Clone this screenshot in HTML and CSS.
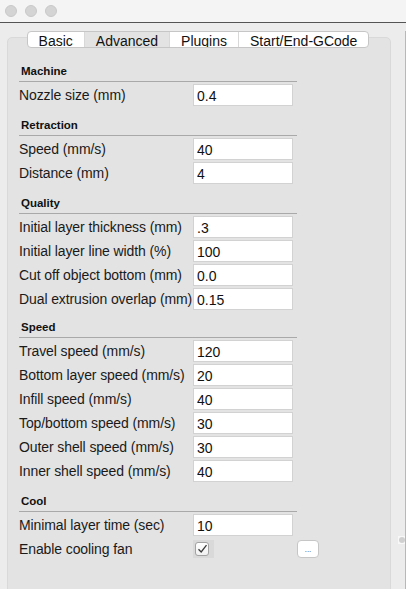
FILE: index.html
```html
<!DOCTYPE html>
<html>
<head>
<meta charset="utf-8">
<link rel="stylesheet" href="styles.css">
</head>
<body>
<div class="titlebar">
  <span class="light"></span><span class="light"></span><span class="light"></span>
</div>
<div class="content">
  <div class="main">
    <div class="tabs">
      <span class="tab">Basic</span>
      <span class="tab tab-selected">Advanced</span>
      <span class="tab">Plugins</span>
      <span class="tab">Start/End-GCode</span>
    </div>
    <div class="group">
      <div class="section">
        <div class="head">Machine</div>
        <div class="rows">
          <label class="label">Nozzle size (mm)</label><input class="field" value="0.4" readonly>
        </div>
      </div>
      <div class="section">
        <div class="head">Retraction</div>
        <div class="rows">
          <label class="label">Speed (mm/s)</label><input class="field" value="40" readonly>
          <label class="label">Distance (mm)</label><input class="field" value="4" readonly>
        </div>
      </div>
      <div class="section">
        <div class="head">Quality</div>
        <div class="rows">
          <label class="label">Initial layer thickness (mm)</label><input class="field" value=".3" readonly>
          <label class="label">Initial layer line width (%)</label><input class="field" value="100" readonly>
          <label class="label">Cut off object bottom (mm)</label><input class="field" value="0.0" readonly>
          <label class="label">Dual extrusion overlap (mm)</label><input class="field" value="0.15" readonly>
        </div>
      </div>
      <div class="section section-tight">
        <div class="head">Speed</div>
        <div class="rows">
          <label class="label">Travel speed (mm/s)</label><input class="field" value="120" readonly>
          <label class="label">Bottom layer speed (mm/s)</label><input class="field" value="20" readonly>
          <label class="label">Infill speed (mm/s)</label><input class="field" value="40" readonly>
          <label class="label">Top/bottom speed (mm/s)</label><input class="field" value="30" readonly>
          <label class="label">Outer shell speed (mm/s)</label><input class="field" value="30" readonly>
          <label class="label">Inner shell speed (mm/s)</label><input class="field" value="40" readonly>
        </div>
      </div>
      <div class="section">
        <div class="head">Cool</div>
        <div class="rows">
          <label class="label">Minimal layer time (sec)</label><input class="field" value="10" readonly>
          <label class="label">Enable cooling fan</label>
          <span class="check-cell">
            <span class="checkbox">
              <svg width="11" height="10" viewBox="0 0 11 10"><path d="M1.5 5.2 L4.2 8 L9.5 1.2" fill="none" stroke="#3a3a3a" stroke-width="1.3"/></svg>
            </span>
          </span>
          <span class="more-btn">...</span>
        </div>
      </div>
    </div>
  </div>
  <div class="strip">
    <span class="knob"></span>
  </div>
</div>
</body>
</html>
```
FILE: styles.css
```css
html, body {
  margin: 0;
  padding: 0;
  width: 406px;
  height: 589px;
  overflow: hidden;
  background: #ececec;
  font-family: "Liberation Sans", Arial, sans-serif;
  color: #1d1d1d;
}

.titlebar {
  height: 22px;
  background: #f4f4f4;
  border-bottom: 1px solid #545454;
  display: flex;
  align-items: center;
  gap: 8px;
  padding-left: 5px;
  box-sizing: content-box;
}

.light {
  width: 10px;
  height: 10px;
  border-radius: 50%;
  background: #d4d4d4;
  border: 1px solid #c9c9c9;
}

.content {
  display: flex;
  padding: 8px 0 0 7px;
  height: 570px;
}

.main {
  width: 384px;
  display: flex;
  flex-direction: column;
}

.tabs {
  align-self: center;
  margin-left: -2px;
  display: flex;
  height: 18px;
  background: #fff;
  border: 1px solid #c6c6c6;
  border-radius: 4px;
  margin-bottom: -11px;
  position: relative;
  z-index: 1;
  overflow: hidden;
}

.tab {
  padding: 0 11px;
  font-size: 14px;
  line-height: 18px;
  color: #111;
  border-left: 1px solid #d8d8d8;
}

.tab:first-child {
  border-left: none;
}

.tab-selected {
  background: #e3e3e3;
}

.group {
  flex: 1;
  background: #e3e3e3;
  border: 1px solid #d9d9d9;
  border-radius: 5px;
  padding: 26px 0 40px 11px;
}

.section + .section {
  margin-top: 12px;
}

.section-tight {
  margin-top: 10px !important;
}

.head {
  width: 276px;
  padding: 0 0 3px 2px;
  font-size: 11.5px;
  font-weight: bold;
  line-height: 14px;
  color: #111;
  border-bottom: 1px solid #a9a9a9;
}

.rows {
  margin-top: 2px;
  display: grid;
  grid-template-columns: 174px 100px auto;
  row-gap: 2px;
  align-items: center;
}

.label {
  grid-column: 1;
  font-size: 14px;
  letter-spacing: -0.1px;
  line-height: 22px;
  color: #1a1a1a;
  white-space: nowrap;
}

.field {
  grid-column: 2;
  width: 100px;
  height: 22px;
  box-sizing: border-box;
  margin: 0;
  border: 1px solid #d2d2d2;
  background: #fff;
  padding: 1px 0 0 3px;
  font-family: "Liberation Sans", Arial, sans-serif;
  font-size: 14px;
  color: #111;
  outline: none;
  position: relative;
}

.check-cell {
  grid-column: 2;
  width: 21px;
  height: 18px;
  background: #d9d9d9;
  display: flex;
  align-items: center;
  padding-left: 2px;
  box-sizing: border-box;
}

.checkbox {
  width: 12px;
  height: 12px;
  background: linear-gradient(#ffffff, #f1f1f1);
  border: 1px solid #a3a3a3;
  border-radius: 3px;
  display: flex;
  align-items: center;
  justify-content: center;
}

.more-btn {
  grid-column: 3;
  margin-left: 4px;
  width: 22px;
  height: 18px;
  box-sizing: border-box;
  background: #fff;
  border: 1px solid #c6c6c6;
  border-radius: 4px;
  font-size: 8px;
  line-height: 18px;
  text-align: center;
  color: #444;
}

.strip {
  flex: 1;
  border-right: 1px solid #b8b8b8;
  display: flex;
  flex-direction: column;
  align-items: flex-end;
}

.knob {
  margin-top: 505px;
  width: 7px;
  height: 8px;
  background: #f8f8f8;
  display: flex;
  align-items: center;
  justify-content: center;
}

.knob::after {
  content: "";
  width: 6px;
  height: 6px;
  border-radius: 50%;
  background: #d0d0d0;
}
```
